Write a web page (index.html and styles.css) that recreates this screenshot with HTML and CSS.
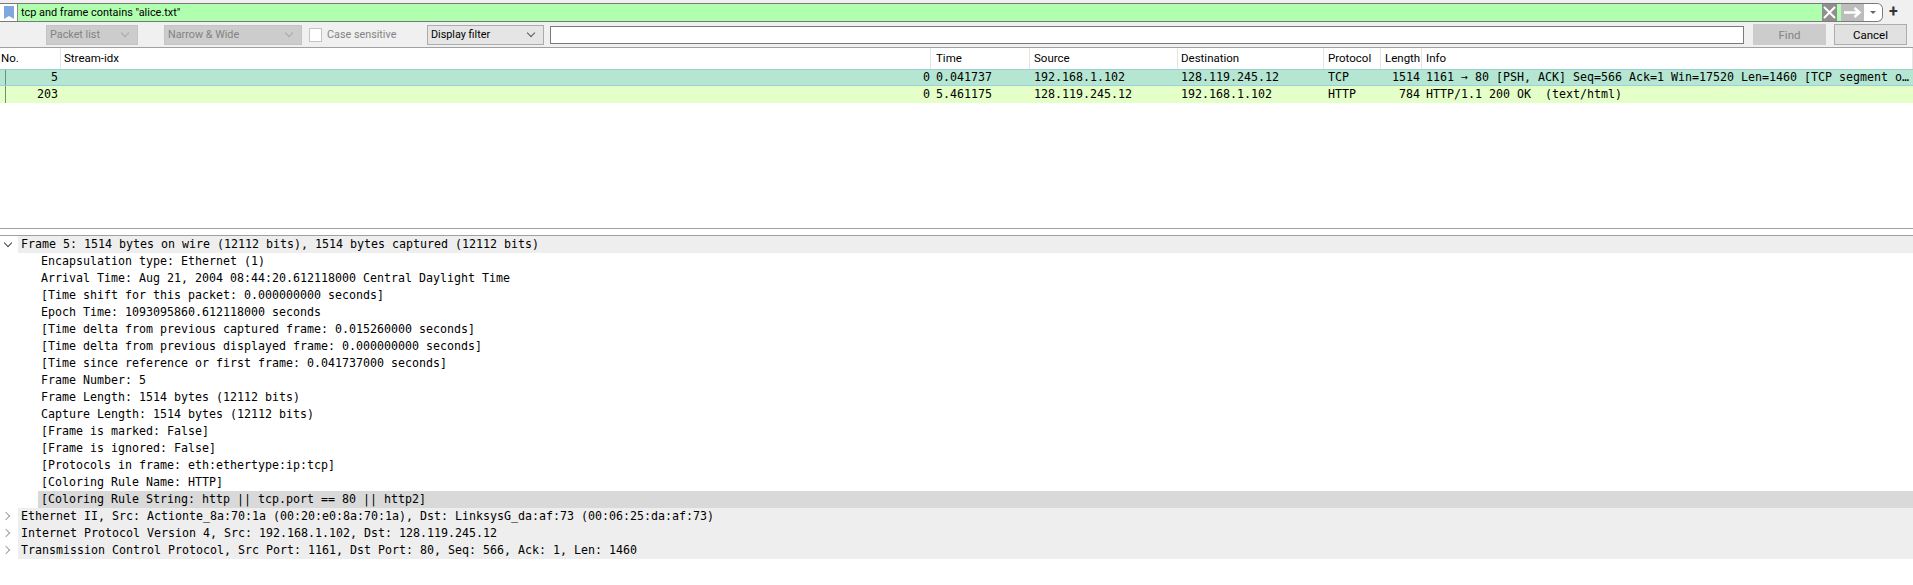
FILE: index.html
```html
<!DOCTYPE html>
<html lang="en">
<head>
    <meta charset="UTF-8">
    <title>Wireshark</title>
    <link rel="stylesheet" href="styles.css">
</head>
<body>
    <div class="filter-bar">
        <div class="filter-box">
            <span class="bookmark">
                <svg width="10" height="13" viewBox="0 0 10 13"><path d="M0 0h10v13L5 10l-5 3z" fill="#7fa9de"/></svg>
            </span>
            <span class="filter-text">tcp and frame contains "alice.txt"</span>
            <span class="clear-btn">
                <svg width="13" height="13" viewBox="0 0 13 13"><path d="M1 1l11 11M12 1L1 12" stroke="#fff" stroke-width="2"/></svg>
            </span>
            <span class="apply-btn">
                <svg width="19" height="11" viewBox="0 0 19 11"><path d="M1 5.500h15M11.500 1l5 4.500-5 4.500" stroke="#fff" stroke-width="2.400" fill="none"/></svg>
            </span>
            <span class="drop-area"><i class="drop-arrow"></i></span>
        </div>
        <span class="plus">+</span>
    </div>

    <div class="find-bar">
        <div class="select disabled w-list"><span>Packet list</span><i class="chev"></i></div>
        <div class="select disabled w-charset"><span>Narrow &amp; Wide</span><i class="chev"></i></div>
        <label class="check"><span class="box"></span>Case sensitive</label>
        <div class="select w-type"><span>Display filter</span><i class="chev"></i></div>
        <div class="find-input"></div>
        <button class="btn btn-find">Find</button>
        <button class="btn btn-cancel">Cancel</button>
    </div>

    <div class="packet-list">
        <div class="row head">
            <span class="c-no">No.</span>
            <span class="c-stream">Stream-idx</span>
            <span class="c-time">Time</span>
            <span class="c-src">Source</span>
            <span class="c-dst">Destination</span>
            <span class="c-proto">Protocol</span>
            <span class="c-len">Length</span>
            <span class="c-info">Info</span>
        </div>
        <div class="row pkt tcp">
            <span class="c-no">5</span>
            <span class="c-stream">0</span>
            <span class="c-time">0.041737</span>
            <span class="c-src">192.168.1.102</span>
            <span class="c-dst">128.119.245.12</span>
            <span class="c-proto">TCP</span>
            <span class="c-len">1514</span>
            <span class="c-info">1161 → 80 [PSH, ACK] Seq=566 Ack=1 Win=17520 Len=1460 [TCP segment o…</span>
        </div>
        <div class="row pkt http">
            <span class="c-no">203</span>
            <span class="c-stream">0</span>
            <span class="c-time">5.461175</span>
            <span class="c-src">128.119.245.12</span>
            <span class="c-dst">192.168.1.102</span>
            <span class="c-proto">HTTP</span>
            <span class="c-len">784</span>
            <span class="c-info">HTTP/1.1 200 OK  (text/html)</span>
        </div>
    </div>

    <div class="details">
        <div class="node top"><i class="tw open"></i><span>Frame 5: 1514 bytes on wire (12112 bits), 1514 bytes captured (12112 bits)</span></div>
        <div class="node leaf">Encapsulation type: Ethernet (1)</div>
        <div class="node leaf">Arrival Time: Aug 21, 2004 08:44:20.612118000 Central Daylight Time</div>
        <div class="node leaf">[Time shift for this packet: 0.000000000 seconds]</div>
        <div class="node leaf">Epoch Time: 1093095860.612118000 seconds</div>
        <div class="node leaf">[Time delta from previous captured frame: 0.015260000 seconds]</div>
        <div class="node leaf">[Time delta from previous displayed frame: 0.000000000 seconds]</div>
        <div class="node leaf">[Time since reference or first frame: 0.041737000 seconds]</div>
        <div class="node leaf">Frame Number: 5</div>
        <div class="node leaf">Frame Length: 1514 bytes (12112 bits)</div>
        <div class="node leaf">Capture Length: 1514 bytes (12112 bits)</div>
        <div class="node leaf">[Frame is marked: False]</div>
        <div class="node leaf">[Frame is ignored: False]</div>
        <div class="node leaf">[Protocols in frame: eth:ethertype:ip:tcp]</div>
        <div class="node leaf">[Coloring Rule Name: HTTP]</div>
        <div class="node leaf selected">[Coloring Rule String: http || tcp.port == 80 || http2]</div>
        <div class="node top"><i class="tw"></i><span>Ethernet II, Src: Actionte_8a:70:1a (00:20:e0:8a:70:1a), Dst: LinksysG_da:af:73 (00:06:25:da:af:73)</span></div>
        <div class="node top"><i class="tw"></i><span>Internet Protocol Version 4, Src: 192.168.1.102, Dst: 128.119.245.12</span></div>
        <div class="node top"><i class="tw"></i><span>Transmission Control Protocol, Src Port: 1161, Dst Port: 80, Seq: 566, Ack: 1, Len: 1460</span></div>
    </div>
</body>
</html>
```

FILE: styles.css
```css
body {
    margin: 0;
    height: 585px;
    overflow: hidden;
    background-color: #fff;
    color: #000;
    font-family: Roboto, sans-serif;
    font-size: 11.5px;
}

/* display filter */
.filter-bar {
    display: flex;
    height: 22px;
    padding-top: 3px;
    background-color: #f0f0f0;
    box-sizing: border-box;
}
.filter-box {
    display: flex;
    align-items: center;
    flex: 1;
    height: 19px;
    border: 1px solid #7a7a7a;
    border-left: none;
    border-radius: 0 6px 6px 0;
    background-color: #afffaf;
    box-sizing: border-box;
}
.bookmark {
    display: flex;
    justify-content: center;
    align-items: center;
    width: 17px;
    height: 17px;
    border-right: 1px solid #8a8a8a;
    background-color: #fff;
}
.filter-text {
    flex: 1;
    padding-left: 3px;
    font-size: 10.9px;
}
.clear-btn {
    display: flex;
    justify-content: center;
    align-items: center;
    width: 15px;
    height: 17px;
    margin-right: 1px;
    background-color: #8f8f8f;
}
.apply-btn {
    display: flex;
    justify-content: center;
    align-items: center;
    width: 23px;
    height: 17px;
    margin-left: 3px;
    background-color: #bdbdbd;
}
.drop-area {
    display: flex;
    justify-content: center;
    align-items: center;
    width: 18px;
    height: 17px;
    border-radius: 0 5px 5px 0;
    background-color: #fff;
}
.drop-arrow {
    width: 0;
    height: 0;
    border-left: 3px solid transparent;
    border-right: 3px solid transparent;
    border-top: 3px solid #666;
}
.plus {
    width: 30px;
    padding-left: 6px;
    font-size: 16px;
    font-weight: bold;
    line-height: 17px;
    color: #333;
    box-sizing: border-box;
}

/* find bar */
.find-bar {
    display: flex;
    align-items: center;
    height: 26px;
    background-color: #f0f0f0;
    border-bottom: 1px solid #a0a0a0;
    font-size: 10.8px;
    box-sizing: border-box;
}
.select {
    display: flex;
    align-items: center;
    justify-content: space-between;
    height: 20px;
    padding: 0 9px 0 3px;
    border: 1px solid #acacac;
    background-color: #e5e5e5;
    box-sizing: border-box;
}
.select.disabled {
    background-color: #cccccc;
    border-color: #c4c4c4;
    color: #838383;
}
.w-list {
    width: 92px;
    margin-left: 46px;
}
.w-charset {
    width: 138px;
    margin-left: 26px;
}
.w-type {
    width: 117px;
}
.chev {
    width: 5px;
    height: 5px;
    margin-bottom: 3px;
    border-right: 1px solid #555;
    border-bottom: 1px solid #555;
    transform: rotate(45deg);
}
.disabled .chev {
    border-color: #a8a8a8;
}
.check {
    display: flex;
    align-items: center;
    width: 118px;
    margin-left: 7px;
    color: #838383;
}
.check .box {
    width: 13px;
    height: 14px;
    margin-right: 5px;
    border: 1px solid #c4c4c4;
    background-color: #fff;
    box-sizing: border-box;
}
.find-input {
    flex: 1;
    height: 18px;
    margin-left: 6px;
    border: 1px solid #7a7a7a;
    background-color: #fff;
    box-sizing: border-box;
}
.btn {
    height: 21px;
    font-family: inherit;
    font-size: 11.5px;
    padding: 0;
    box-sizing: border-box;
}
.btn-find {
    width: 73px;
    margin-left: 9px;
    border: 1px solid #cccccc;
    background-color: #cccccc;
    color: #838383;
}
.btn-cancel {
    width: 73px;
    margin: 0 6px 0 8px;
    border: 1px solid #adadad;
    background-color: #e1e1e1;
}

/* packet list */
.packet-list {
    height: 181px;
    border-bottom: 1px solid #a0a0a0;
    box-sizing: border-box;
}
.row {
    display: grid;
    grid-template-columns: 61px 870px 99px 148px 146px 57px 41px 1fr;
}
.row span {
    white-space: pre;
    overflow: hidden;
    padding: 0 2px 0 4px;
}
.row .c-stream {
    padding: 0 1px 0 3px;
}
.row .c-time {
    padding-left: 5px;
}
.row .c-dst {
    padding-left: 3px;
}
.head {
    height: 21px;
}
.head span {
    height: 21px;
    line-height: 21px;
    border-right: 1px solid #e5e5e5;
    box-sizing: border-box;
}
.head .c-no {
    padding-left: 1px;
}
.pkt {
    height: 17px;
    font-family: "DejaVu Sans Mono", monospace;
    font-size: 11.63px;
    box-sizing: border-box;
}
.pkt .c-no,
.pkt .c-stream,
.pkt .c-len {
    text-align: right;
}
.pkt .c-no {
    margin-left: 5px;
    padding-right: 3px;
    border-left: 1px solid #6e8f80;
}
.tcp {
    line-height: 15px;
    background-color: #b5e6d2;
    border-top: 1px solid #9ccfd6;
    border-bottom: 1px solid #9ccfd6;
}
.http {
    line-height: 17px;
    background-color: #e4ffc7;
}

/* packet details */
.details {
    margin-top: 6px;
    border-top: 1px solid #a0a0a0;
    font-family: "DejaVu Sans Mono", monospace;
    font-size: 11.63px;
}
.node {
    height: 17px;
    line-height: 17px;
    white-space: pre;
}
.top {
    position: relative;
    margin-left: 18px;
    padding-left: 3px;
    background-color: #eeeeee;
}
.tw {
    position: absolute;
    left: -15px;
    top: 5px;
    width: 5px;
    height: 5px;
    border-right: 1.5px solid #a0a0a0;
    border-top: 1.5px solid #a0a0a0;
    transform: rotate(45deg);
}
.tw.open {
    left: -13px;
    top: 4px;
    border-color: #444;
    transform: rotate(135deg);
}
.leaf {
    margin-left: 38px;
    padding-left: 3px;
}
.selected {
    background-color: #d9d9d9;
}
```
